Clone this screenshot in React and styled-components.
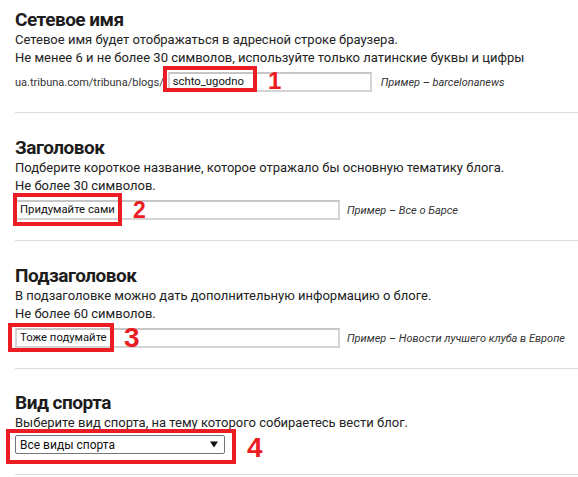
import React from "react";
import styled, { createGlobalStyle } from "styled-components";

const Global = createGlobalStyle`
  html, body { margin: 0; padding: 0; background: #fff; }
  body { font-family: Roboto, "Liberation Sans", Arial, sans-serif; color: #222; overflow: hidden; }
`;

const Page = styled.div`
  margin-left: 15px;
  width: 563px;
`;

const Section = styled.section`
  padding: ${(p) => p.$top}px 0 20px;
  border-bottom: 1px solid #dcdcdc;
`;

const Title = styled.h2`
  margin: 0;
  font-size: 19px;
  letter-spacing: -0.5px;
  line-height: 22px;
  font-weight: 700;
  color: #1c1c1c;
`;

const Desc = styled.p`
  margin: 0 0 ${(p) => p.$gap ?? 5}px;
  font-size: 13px;
  line-height: 18px;
  color: #222;
`;

const Row = styled.div`
  position: relative;
  display: flex;
  align-items: center;
  height: ${(p) => p.$h ?? 20}px;
`;

const Prefix = styled.span`
  font-size: 11px;
  color: #333;
  margin-right: 4px;
`;

const TextInput = styled.div`
  box-sizing: border-box;
  width: ${(p) => p.$w}px;
  height: 20px;
  border: 2px solid #d4d4d4;
  border-top-color: #c6c6c6;
  padding: 0 3px;
  font-size: 11.3px;
  line-height: 16px;
  color: #111;
  background: #fff;
  white-space: nowrap;
`;

const Example = styled.span`
  margin-left: ${(p) => p.$gap}px;
  font-size: 11px;
  font-style: italic;
  color: #333;
`;

const SelectBox = styled.div`
  box-sizing: border-box;
  width: 210px;
  height: 19px;
  border: 1px solid #767676;
  border-radius: 2px;
  padding: 0 6px 0 4px;
  display: flex;
  align-items: center;
  justify-content: space-between;
  font-size: 12px;
  color: #111;
  background: #fff;
`;

const Mark = styled.div`
  position: absolute;
  box-sizing: border-box;
  border: 4px solid #ec1c24;
  pointer-events: none;
`;

const Num = styled.span`
  position: absolute;
  font-family: "Liberation Sans", Arial, sans-serif;
  font-weight: 700;
  line-height: 1;
  color: #ec1c24;
`;

function Arrow() {
  return (
    <svg width="8" height="7" viewBox="0 0 8 7">
      <path d="M0 0.5 H8 L4 6.5 Z" fill="#111" />
    </svg>
  );
}

export default function App() {
  return (
    <>
      <Global />
      <Page>
        <Section $top={9}>
          <Title>Сетевое имя</Title>
          <Desc>
            Сетевое имя будет отображаться в адресной строке браузера.
            <br />
            Не менее 6 и не более 30 символов, используйте только латинские буквы и цифры
          </Desc>
          <Row>
            <Prefix>ua.tribuna.com/tribuna/blogs/</Prefix>
            <TextInput $w={204}>schto_ugodno</TextInput>
            <Example $gap={9}>Пример – barcelonanews</Example>
            <Mark style={{ left: 148, top: -6, width: 94, height: 26 }} />
            <Num style={{ left: 253, top: -3, fontSize: 24 }}>1</Num>
          </Row>
        </Section>

        <Section $top={24}>
          <Title>Заголовок</Title>
          <Desc>
            Подберите короткое название, которое отражало бы основную тематику блога.
            <br />
            Не более 30 символов.
          </Desc>
          <Row>
            <TextInput $w={325}>Придумайте сами</TextInput>
            <Example $gap={7}>Пример – Все о Барсе</Example>
            <Mark style={{ left: -2, top: -7, width: 109, height: 33 }} />
            <Num style={{ left: 118, top: -1, fontSize: 23 }}>2</Num>
          </Row>
        </Section>

        <Section $top={24}>
          <Title>Подзаголовок</Title>
          <Desc>
            В подзаголовке можно дать дополнительную информацию о блоге.
            <br />
            Не более 60 символов.
          </Desc>
          <Row>
            <TextInput $w={325}>Тоже подумайте</TextInput>
            <Example $gap={7}>Пример – Новости лучшего клуба в Европе</Example>
            <Mark style={{ left: -7, top: -5, width: 106, height: 29 }} />
            <Num style={{ left: 109, top: -4, fontSize: 28 }}>3</Num>
          </Row>
        </Section>

        <Section $top={23}>
          <Title>Вид спорта</Title>
          <Desc $gap={3}>Выберите вид спорта, на тему которого собираетесь вести блог.</Desc>
          <Row $h={19}>
            <SelectBox>
              <span>Все виды спорта</span>
              <Arrow />
            </SelectBox>
            <Mark style={{ left: -9, top: -6, width: 230, height: 35 }} />
            <Num style={{ left: 232, top: -1, fontSize: 28 }}>4</Num>
          </Row>
        </Section>
      </Page>
    </>
  );
}
